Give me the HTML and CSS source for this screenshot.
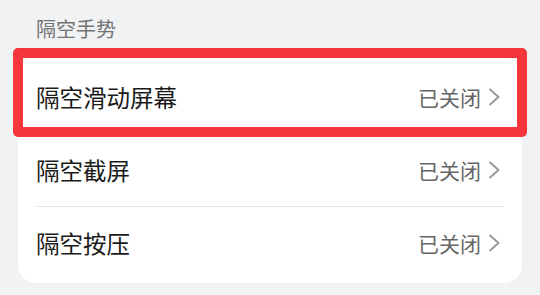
FILE: index.html
```html
<!DOCTYPE html>
<html lang="zh-CN">
<head>
    <meta charset="UTF-8">
    <meta name="viewport" content="width=device-width, initial-scale=1.0">
    <title>隔空手势</title>
    <link rel="stylesheet" href="styles.css">
</head>
<body>

    <!-- 分组标题 -->
    <div class="group-title">隔空手势</div>

    <!-- 设置列表 -->
    <div class="card">
        <div class="item">
            <span class="item-name">隔空滑动屏幕</span>
            <span class="item-value">已关闭
                <svg class="chevron" viewBox="0 0 12 18"><path d="M1.5 1 L10.5 9 L1.5 17"/></svg>
            </span>
        </div>
        <div class="item">
            <span class="item-name">隔空截屏</span>
            <span class="item-value">已关闭
                <svg class="chevron" viewBox="0 0 12 18"><path d="M1.5 1 L10.5 9 L1.5 17"/></svg>
            </span>
        </div>
        <div class="item">
            <span class="item-name">隔空按压</span>
            <span class="item-value">已关闭
                <svg class="chevron" viewBox="0 0 12 18"><path d="M1.5 1 L10.5 9 L1.5 17"/></svg>
            </span>
        </div>

        <!-- 高亮框 -->
        <div class="highlight"></div>
    </div>

</body>
</html>
```

FILE: styles.css
```css
body {
    margin: 0;
    padding: 0;
    background-color: #f1f2f4;
    font-family: "Noto Sans CJK SC", "Noto Sans", sans-serif;
}
.group-title {
    height: 57px;
    line-height: 58px;
    padding-left: 36px;
    font-size: 20px;
    color: #737373;
}
/* 列表卡片 */
.card {
    position: relative;
    margin: 0 18px;
    padding: 3px 0 4px;
    background-color: #ffffff;
    border-radius: 18px;
}
.item {
    display: flex;
    align-items: center;
    justify-content: space-between;
    height: 73px;
    margin: 0 18px;
    border-top: 1px solid #e3e3e3;
    box-sizing: border-box;
}
.item:first-child {
    border-top: none;
}
.item-name {
    font-size: 23.5px;
    color: #1a1a1a;
}
.item-value {
    display: flex;
    align-items: center;
    gap: 7px;
    font-size: 21px;
    color: #666666;
}
.chevron {
    width: 12px;
    height: 18px;
    margin-right: 4px;
    fill: none;
    stroke: #9a9a9a;
    stroke-width: 2;
    stroke-linejoin: round;
}
.highlight {
    position: absolute;
    left: -5px;
    top: -9px;
    width: 514px;
    height: 89px;
    border: 10.5px solid #f5363a;
    border-radius: 5px;
    box-sizing: border-box;
}
```
